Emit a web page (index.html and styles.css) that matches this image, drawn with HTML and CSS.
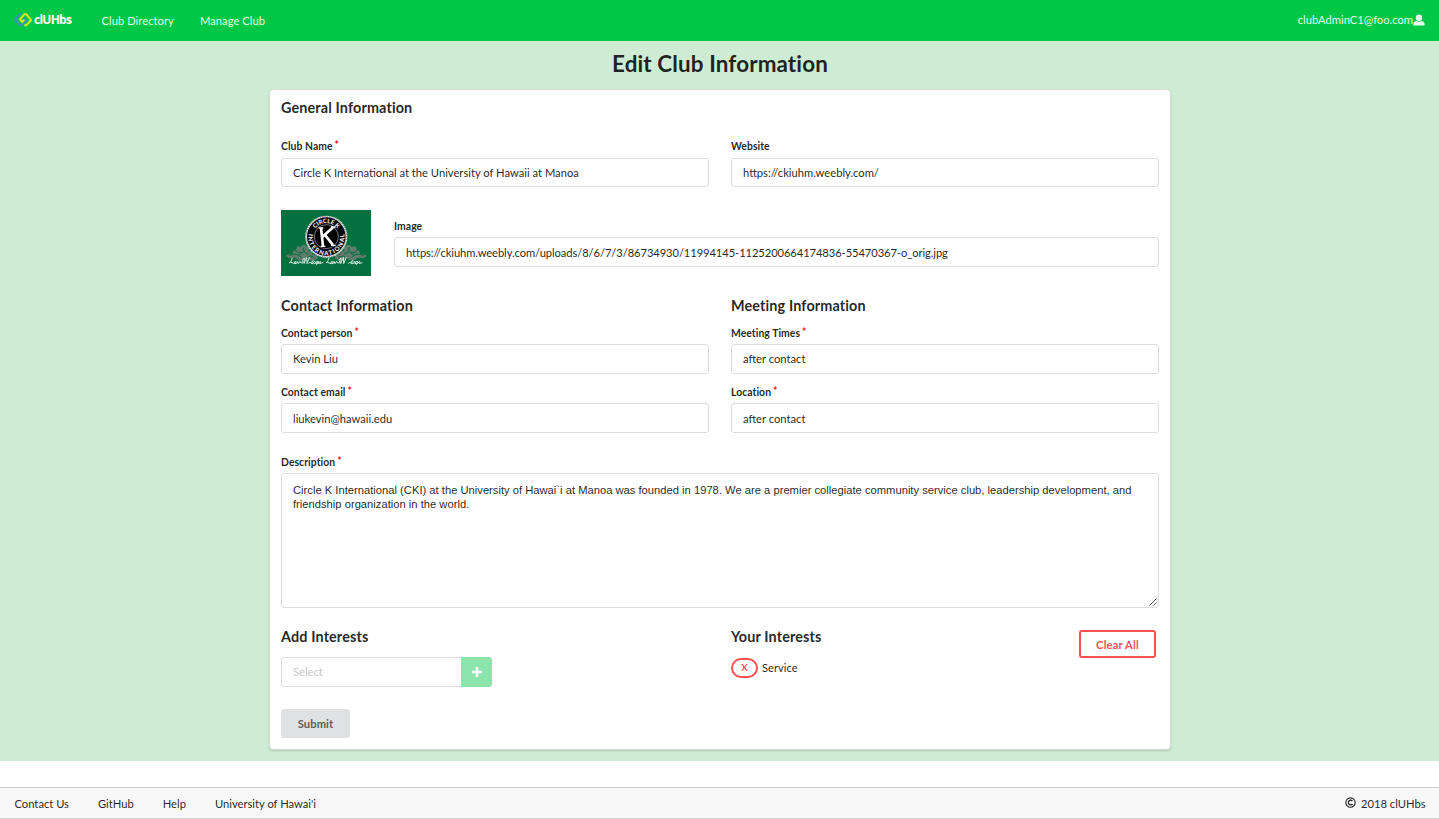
FILE: index.html
```html
<!DOCTYPE html>
<html lang="en">
<head>
<meta charset="utf-8">
<title>clUHbs</title>
<link rel="stylesheet" href="styles.css">
</head>
<body>
<nav class="navbar">
  <a class="brand">
    <svg class="brand-mark" viewBox="0 0 54 42" fill="none" stroke-width="6">
      <path d="M22 4L17 4L3 21L17 37L23 37L37 23L30 15" stroke="#3a92b8"/>
      <path d="M31 37L37 37L51 21L37 4L31 4L18 19L25 27L31 20" stroke="#d8e820"/>
    </svg>
    <span class="brand-name">clUHbs</span>
  </a>
  <a class="nav-link directory">Club Directory</a>
  <a class="nav-link manage">Manage Club</a>
  <a class="nav-link account"><span>clubAdminC1@foo.com</span>
    <svg class="user-icon" viewBox="0 0 12 12" fill="currentColor"><path d="M6 0.5a3.2 3.2 0 0 1 3.2 3.2C9.200 5.900 7.800 7.300 6 7.300S2.800 5.900 2.800 3.700A3.200 3.200 0 0 1 6 .5zM3.500 7.100Q6 8.700 8.500 7.100C10.700 7.400 11.600 8.600 11.600 10v1q0 .6-.6.6H1q-.6 0-.6-.6v-1C.4 8.600 1.300 7.400 3.500 7.100z"/></svg>
  </a>
</nav>
<main class="page">
  <h1 class="title">Edit Club Information</h1>
  <form class="card">
    <h3 class="heading">General Information</h3>
    <div class="columns general">
      <div class="field"><label class="label required">Club Name</label><input class="input" value="Circle K International at the University of Hawaii at Manoa"></div>
      <div class="field"><label class="label">Website</label><input class="input" value="https://ckiuhm.weebly.com/"></div>
    </div>
    <div class="image-row">
      <svg class="club-image" viewBox="0 0 270 198">
        <rect width="270" height="198" fill="#04703f"/>
        <g fill="#5f7c6c">
          <path d="M14 137q12-8 22-2q-4-16 9-14q2-19 14-9q8-14 18-3q12 4 4 15q13-3 14 10q16 0 15 12l-19 6l-17-6l-18 7l-14-10l-18 1z"/>
          <path d="M258 137q-12-8-22-2q4-16-9-14q-2-19-14-9q-8-14-18-3q-12 4-4 15q-13-3-14 10q-16 0-15 12l19 6l17-6l18 7l14-10l18 1z"/>
        </g>
        <g fill="none" stroke="#04703f" stroke-width="3">
          <path d="M25 137q20-12 36 6M43 119q5 14 20 7M68 112q-3 16 15 20M77 147q4-14 22-5M53 136l16-12"/>
          <path d="M247 137q-20-12-36 6M229 119q-5 14-20 7M204 112q3 16-15 20M195 147q-4-14-22-5M219 136l-16-12"/>
        </g>
        <circle cx="136" cy="80" r="63" fill="#e9eeeb"/>
        <circle cx="136" cy="80" r="61" fill="none" stroke="#5d6862" stroke-width="3" stroke-dasharray="3 4"/>
        <circle cx="136" cy="80" r="58" fill="#080b09"/>
        <circle cx="136" cy="80" r="36" fill="#000" stroke="#ddd" stroke-width="1.500"/>
        <defs>
          <path id="arc-top" d="M95 80a41 41 0 0 1 82 0"/>
          <path id="arc-bottom" d="M85 64a54 54 0 1 0 102 0"/>
        </defs>
        <text class="seal-text"><textPath href="#arc-top" startOffset="50%" text-anchor="middle">CIRCLE K</textPath></text>
        <text class="seal-text"><textPath href="#arc-bottom" startOffset="50%" text-anchor="middle" textLength="190">INTERNATIONAL</textPath></text>
        <g fill="none" stroke="#fff">
          <path d="M120 54l6 55M157 51l-34 31M133 76l23 29" stroke-width="8"/>
          <path d="M113 54h14M119 109h14M150 51h14M150 106h14" stroke-width="4"/>
          <path d="M34 143q-5 18-9 15q1-4 12 2q10 3 7-6q-7 1-3 7q9 1 8-7l3 7l5-7q2 8 9 4q-5-8 4-14l-1 17l8-19l1 19l8-20M83 161q5-9 7-2t7-1t8 2t6-7q1 10 8 7t8-3M144 143q-5 18-9 15q1-4 12 2q10 3 7-6q-7 1-3 7q9 1 8-7l3 7l5-7q2 8 9 4q-5-8 4-14l-1 17l8-19l1 19l8-20M202 161q5-9 7-2t7-1t8 2t6-7q1 10 14 5" stroke="#d5e7dd" stroke-width="3"/>
          <path d="M92 157q10-6 3-5q-7 9 3 9q9-2 11-7q-10 3-3 7q8 1 12-7l1 7M210 157q10-6 3-5q-7 9 3 9q9-2 11-7q-10 3-3 7q8 1 12-7l1 7" stroke="#d5e7dd" stroke-width="2.500"/>
        </g>
      </svg>
      <div class="field"><label class="label">Image</label><input class="input url" value="https://ckiuhm.weebly.com/uploads/8/6/7/3/86734930/11994145-1125200664174836-55470367-o_orig.jpg"></div>
    </div>
    <div class="columns details">
      <section>
        <h3 class="heading">Contact Information</h3>
        <div class="field stacked"><label class="label required">Contact person</label><input class="input upper" value="Kevin Liu"></div>
        <div class="field stacked"><label class="label required">Contact email</label><input class="input" value="liukevin@hawaii.edu"></div>
      </section>
      <section>
        <h3 class="heading">Meeting Information</h3>
        <div class="field stacked"><label class="label required">Meeting Times</label><input class="input upper" value="after contact"></div>
        <div class="field stacked"><label class="label required">Location</label><input class="input" value="after contact"></div>
      </section>
    </div>
    <div class="field description">
      <label class="label required">Description</label>
      <div class="textarea-wrap">
        <textarea class="textarea">Circle K International (CKI) at the University of Hawai`i at Manoa was founded in 1978. We are a premier collegiate community service club, leadership development, and friendship organization in the world.</textarea>
        <svg class="grip" viewBox="0 0 8 8" stroke="#555" stroke-width="1"><path d="M.5 7.500l7-7M4.500 7.500l3-3"/></svg>
      </div>
    </div>
    <div class="columns interests">
      <section>
        <h3 class="heading">Add Interests</h3>
        <div class="picker">
          <input class="input upper" placeholder="Select">
          <button class="add" type="button" aria-label="Add"><svg viewBox="0 0 10 10" fill="#fff"><path d="M3.700 0h2.600v3.700H10v2.600H6.300V10H3.700V6.300H0V3.700h3.700z"/></svg></button>
        </div>
      </section>
      <section class="yours">
        <div>
          <h3 class="heading">Your Interests</h3>
          <div class="interest"><button class="remove" type="button">X</button><span>Service</span></div>
        </div>
        <button class="clear" type="button">Clear All</button>
      </section>
    </div>
    <button class="submit" type="button">Submit</button>
  </form>
</main>
<footer class="footer">
  <a>Contact Us</a><a>GitHub</a><a>Help</a><a>University of Hawai'i</a>
  <span class="copyright"><svg viewBox="0 0 12 12" fill="none" stroke="currentColor"><circle cx="6" cy="6" r="5.100" stroke-width="1.200"/><path d="M8.100 7.600A2.500 2.500 0 1 1 8.100 4.400" stroke-width="1.400"/></svg>2018 clUHbs</span>
</footer>
</body>
</html>
```
FILE: styles.css
```css
* { box-sizing: border-box; }
body { margin: 0; height: 819px; display: flex; flex-direction: column; overflow: hidden; background: #fff; color: rgba(0,0,0,.87); font: 11.2px/16px Lato, sans-serif; }
h1, h3 { margin: 0; font-weight: 700; }
button, input { font-family: inherit; font-size: inherit; }
.navbar { height: 41px; flex: none; display: flex; align-items: center; padding: 0 14px; background: #00c846; color: rgba(255,255,255,.9); }
.brand { display: flex; align-items: center; width: 87.500px; height: 41px; padding-bottom: 1px; }
.brand-mark { width: 18px; height: 14px; }
.brand-name { margin-left: 2px; font: 700 12px/16px "Open Sans", sans-serif; letter-spacing: -.75px; color: #fff; }
.nav-link { padding-top: 1px; letter-spacing: .04px; }
.manage { margin-left: 26px; }
.account { display: flex; align-items: center; margin-left: auto; padding: 0 0 1px 0; letter-spacing: 0; }
.user-icon { width: 12px; height: 12px; margin-left: 0; }
.page { flex: none; height: 720px; padding: 9px 0 0 1px; background: #ceebd3; display: flex; flex-direction: column; align-items: center; }
.title { font-size: 22.4px; line-height: 28px; letter-spacing: .13px; }
.card { width: 902px; height: 661px; margin-top: 11px; padding: 9px 11px 10px; border: 1px solid #d4dcd5; border-radius: 4px; background: #fff; box-shadow: 0 1px 2px rgba(34,36,38,.15); }
.heading { font-size: 14.4px; line-height: 18px; letter-spacing: .13px; }
.columns { display: grid; grid-template-columns: 428px 428px; column-gap: 22px; }
.field { display: flex; flex-direction: column; gap: 4px; }
.label { height: 14px; font-size: 10.4px; line-height: 14px; font-weight: 700; letter-spacing: .05px; }
.required::after { content: "*"; color: #f02020; margin-left: 2px; display: inline-block; transform: translateY(-1px); }
.input { width: 100%; height: 30px; padding: 0 11px; border: 1px solid #dcddde; border-radius: 3px; background: #fff; color: rgba(0,0,0,.87); outline: none; }
.upper { padding-bottom: 1px; }
.url { letter-spacing: -.088px; }
.input::placeholder { color: #c7c7c7; }
.general { margin-top: 22px; }
.general .field { gap: 5px; }
.general .input { height: 29px; }
.image-row { display: flex; gap: 23px; margin-top: 23px; height: 66px; }
.image-row .field { flex: 1; padding-top: 9px; }
.club-image { width: 90px; height: 66px; flex: none; }
.seal-text { font: 700 18px Lato, sans-serif; fill: #fff; }
.details { margin-top: 21px; }
.stacked { margin-top: 11px; }
.description { margin-top: 22px; }
.textarea-wrap { position: relative; height: 135px; }
.textarea { display: block; width: 100%; height: 135px; padding: 9px 11px; border: 1px solid #dcddde; border-radius: 3px; resize: none; overflow: hidden; outline: none; color: rgba(0,0,0,.87); font: 11.2px/14.4px "Liberation Sans", Arial, sans-serif; letter-spacing: .006px; }
.grip { position: absolute; right: 2px; bottom: 2px; width: 8px; height: 8px; }
.interests { margin-top: 20px; }
.picker { display: flex; width: 211px; margin-top: 11px; }
.picker .input { width: 180px; border-right: 0; border-radius: 3px 0 0 3px; }
.add { width: 31px; height: 30px; padding: 0; border: 0; border-radius: 0 3px 3px 0; background: #8be5ab; display: flex; align-items: center; justify-content: center; }
.add svg { width: 10px; height: 10px; }
.yours { display: flex; justify-content: space-between; padding-right: 3px; }
.interest { display: flex; align-items: center; gap: 4px; margin-top: 12px; height: 20px; }
.remove, .clear { padding: 0; border: 2px solid #ff5050; background: #fff; color: #ff5050; font-weight: 700; }
.remove { width: 27px; height: 20px; border-radius: 10px; font-size: 9.500px; line-height: 16px; }
.clear { width: 77px; height: 28px; margin-top: 2px; border-radius: 3px; padding-top: 1px; letter-spacing: .15px; }
.submit { display: block; width: 69px; height: 29px; margin-top: 22px; padding: 0; border: 0; border-radius: 3px; background: #e0e1e2; color: #5d5e5f; font-weight: 700; letter-spacing: .1px; }
.footer { flex: none; display: flex; align-items: center; gap: 29px; height: 32px; margin-top: 26px; padding: 1px 13.500px 0 14.500px; border-top: 1px solid #d1d1d2; border-bottom: 1px solid #d1d1d2; background: #f8f8f8; }
.copyright { display: flex; align-items: center; gap: 5px; margin-left: auto; }
.copyright svg { width: 11px; height: 11px; margin-top: -2px; }
```
